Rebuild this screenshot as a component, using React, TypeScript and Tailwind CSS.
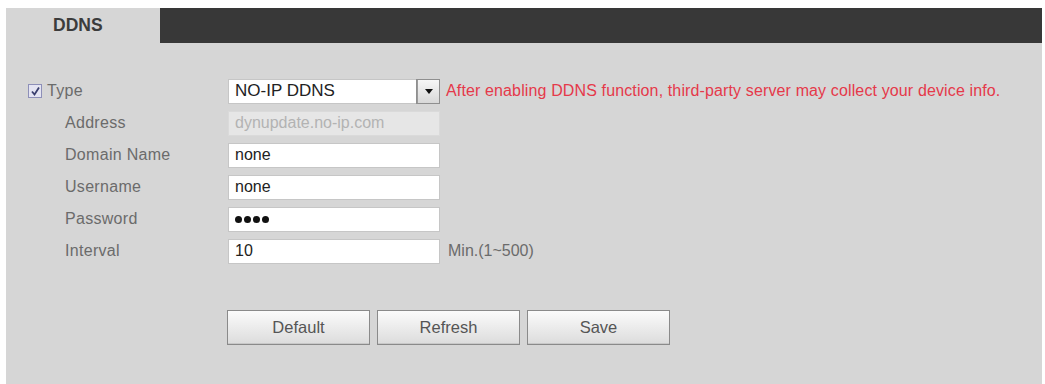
import React from 'react';

const font = { fontFamily: '"Liberation Sans", Arial, sans-serif' };

const rows = [
  { label: 'Domain Name', value: 'none' },
  { label: 'Username', value: 'none' },
];

function Checkbox() {
  return (
    <div className="w-[14px] h-[14px] border border-[#8d8fb8] bg-[#e4e4f2] flex items-center justify-center">
      <svg width="11" height="11" viewBox="0 0 11 11">
        <path d="M2 5.5 L4.5 8.5 L9 1.5" stroke="#3a3f6e" strokeWidth="1.8" fill="none" />
      </svg>
    </div>
  );
}

function TextBox({ value, disabled }: { value: string; disabled?: boolean }) {
  return (
    <div
      className={`w-[212px] h-[25px] border flex items-center px-[6px] text-[16px] ${
        disabled ? 'bg-[#e6e6e6] border-[#dadada] text-[#b3b3b3]' : 'bg-white border-[#c6c6c6] text-[#222]'
      }`}
    >
      {value}
    </div>
  );
}

function Btn({ children }: { children: React.ReactNode }) {
  return (
    <button className="w-[143px] h-[35px] border border-[#8a8a8a] bg-gradient-to-b from-[#fbfbfb] to-[#dcdcdc] text-[16.5px] text-[#555] shadow-[inset_0_-1px_0_#c8c8c8]">
      {children}
    </button>
  );
}

const label = 'w-[222px] pl-[59px] text-[16px] tracking-[0.3px] text-[#6b6b6b]';

export default function App() {
  return (
    <div className="w-[1045px] h-[384px] bg-white pt-[8px] pl-[6px] pr-[3px]" style={font}>
      <div className="h-full bg-[#d6d6d6] flex flex-col">
        <div className="flex h-[35px]">
          <div className="w-[154px] flex items-center pl-[47px] text-[17.5px] font-bold text-[#3c3c3c]">DDNS</div>
          <div className="flex-1 bg-[#383838]" />
        </div>

        <div className="mt-[32px] flex flex-col">
          <div className="flex items-center h-[32px]">
            <div className="w-[222px] pl-[22px] flex items-center gap-[5px] text-[16px] tracking-[0.3px] text-[#6b6b6b]">
              <Checkbox />
              <span>Type</span>
            </div>
            <div className="w-[212px] h-[25px] bg-white border border-[#c6c6c6] flex items-center justify-between">
              <span className="pl-[6px] text-[17px] text-[#222]">NO-IP DDNS</span>
              <div className="w-[22px] h-[23px] border-l border-[#9a9a9a] bg-gradient-to-b from-[#f6f6f6] to-[#d8d8d8] flex items-center justify-center outline outline-1 outline-[#8f8f8f]">
                <svg width="8" height="5" viewBox="0 0 8 5">
                  <path d="M0 0 L8 0 L4 5 Z" fill="#111" />
                </svg>
              </div>
            </div>
            <span className="ml-[6px] text-[16px] text-[#e5394a] tracking-[0.13px] whitespace-nowrap">
              After enabling DDNS function, third-party server may collect your device info.
            </span>
          </div>

          <div className="flex items-center h-[32px]">
            <div className={label}>Address</div>
            <TextBox value="dynupdate.no-ip.com" disabled />
          </div>

          {rows.map((r) => (
            <div key={r.label} className="flex items-center h-[32px]">
              <div className={label}>{r.label}</div>
              <TextBox value={r.value} />
            </div>
          ))}

          <div className="flex items-center h-[32px]">
            <div className={label}>Password</div>
            <div className="w-[212px] h-[25px] bg-white border border-[#c6c6c6] flex items-center px-[6px] gap-[2px]">
              {[0, 1, 2, 3].map((i) => (
                <span key={i} className="w-[7px] h-[7px] rounded-full bg-[#111]" />
              ))}
            </div>
          </div>

          <div className="flex items-center h-[32px]">
            <div className={label}>Interval</div>
            <TextBox value="10" />
            <span className="ml-[8px] text-[16px] text-[#6b6b6b]">Min.(1~500)</span>
          </div>

          <div className="mt-[43px] pl-[221px] flex gap-[7px]">
            <Btn>Default</Btn>
            <Btn>Refresh</Btn>
            <Btn>Save</Btn>
          </div>
        </div>
      </div>
    </div>
  );
}
